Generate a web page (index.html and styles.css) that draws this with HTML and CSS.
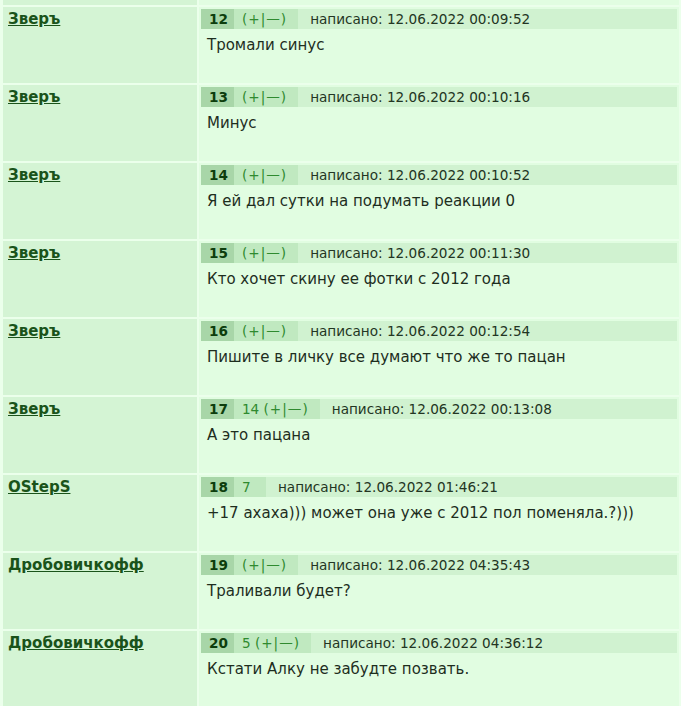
FILE: index.html
```html
<!DOCTYPE html>
<html lang="ru">
    <head>
        <meta charset="UTF-8">
        <meta name="viewport" content="width=device-width, initial-scale=1.0">
        <title>Обсуждение</title>
        <link rel="stylesheet" href="styles.css">
    </head>
    <body>
        <div class="thread">
            <!-- хвост предыдущего сообщения -->
            <div class="post post-tail">
                <div class="author"></div>
                <div class="body"></div>
            </div>

            <div class="post">
                <div class="author"><a href="#">Зверъ</a></div>
                <div class="body">
                    <div class="post-head">
                        <span class="num">12</span>
                        <span class="rate">(<a href="#">+</a>|<a href="#">&mdash;</a>)</span>
                        <span class="date">написано: 12.06.2022 00:09:52</span>
                    </div>
                    <div class="text">Тромали синус</div>
                </div>
            </div>

            <div class="post">
                <div class="author"><a href="#">Зверъ</a></div>
                <div class="body">
                    <div class="post-head">
                        <span class="num">13</span>
                        <span class="rate">(<a href="#">+</a>|<a href="#">&mdash;</a>)</span>
                        <span class="date">написано: 12.06.2022 00:10:16</span>
                    </div>
                    <div class="text">Минус</div>
                </div>
            </div>

            <div class="post">
                <div class="author"><a href="#">Зверъ</a></div>
                <div class="body">
                    <div class="post-head">
                        <span class="num">14</span>
                        <span class="rate">(<a href="#">+</a>|<a href="#">&mdash;</a>)</span>
                        <span class="date">написано: 12.06.2022 00:10:52</span>
                    </div>
                    <div class="text">Я ей дал сутки на подумать реакции 0</div>
                </div>
            </div>

            <div class="post">
                <div class="author"><a href="#">Зверъ</a></div>
                <div class="body">
                    <div class="post-head">
                        <span class="num">15</span>
                        <span class="rate">(<a href="#">+</a>|<a href="#">&mdash;</a>)</span>
                        <span class="date">написано: 12.06.2022 00:11:30</span>
                    </div>
                    <div class="text">Кто хочет скину ее фотки с 2012 года</div>
                </div>
            </div>

            <div class="post">
                <div class="author"><a href="#">Зверъ</a></div>
                <div class="body">
                    <div class="post-head">
                        <span class="num">16</span>
                        <span class="rate">(<a href="#">+</a>|<a href="#">&mdash;</a>)</span>
                        <span class="date">написано: 12.06.2022 00:12:54</span>
                    </div>
                    <div class="text">Пишите в личку все думают что же то пацан</div>
                </div>
            </div>

            <div class="post">
                <div class="author"><a href="#">Зверъ</a></div>
                <div class="body">
                    <div class="post-head">
                        <span class="num">17</span>
                        <span class="rate">14 (<a href="#">+</a>|<a href="#">&mdash;</a>)</span>
                        <span class="date">написано: 12.06.2022 00:13:08</span>
                    </div>
                    <div class="text">А это пацана</div>
                </div>
            </div>

            <div class="post">
                <div class="author"><a href="#">OStepS</a></div>
                <div class="body">
                    <div class="post-head">
                        <span class="num">18</span>
                        <span class="rate">7</span>
                        <span class="date">написано: 12.06.2022 01:46:21</span>
                    </div>
                    <div class="text">+17 ахаха))) может она уже с 2012 пол поменяла.?)))</div>
                </div>
            </div>

            <div class="post">
                <div class="author"><a href="#">Дробовичкофф</a></div>
                <div class="body">
                    <div class="post-head">
                        <span class="num">19</span>
                        <span class="rate">(<a href="#">+</a>|<a href="#">&mdash;</a>)</span>
                        <span class="date">написано: 12.06.2022 04:35:43</span>
                    </div>
                    <div class="text">Траливали будет?</div>
                </div>
            </div>

            <div class="post">
                <div class="author"><a href="#">Дробовичкофф</a></div>
                <div class="body">
                    <div class="post-head">
                        <span class="num">20</span>
                        <span class="rate">5 (<a href="#">+</a>|<a href="#">&mdash;</a>)</span>
                        <span class="date">написано: 12.06.2022 04:36:12</span>
                    </div>
                    <div class="text">Кстати Алку не забудте позвать.</div>
                </div>
            </div>
        </div>
    </body>
</html>
```

FILE: styles.css
```css
/* Общие стили */
body, html {
    margin: 0;
    padding: 0;
    background-color: #ebffeb;
    font-family: 'DejaVu Sans', Verdana, sans-serif;
    color: #1e2e1e;
    overflow: hidden;
}

/* Лента сообщений */
.thread {
    display: flex;
    flex-direction: column;
    gap: 2px;
    padding: 0 2px 0 3px;
}

.post {
    display: grid;
    grid-template-columns: 194px 1fr;
    gap: 2px;
    height: 76px;
}

.post-tail {
    height: 5px;
}

/* Колонка автора */
.author {
    background-color: #d4f4d4;
    padding: 2px 5px;
}

.author a {
    color: #1a531a;
    font-weight: bold;
    font-size: 15px;
    line-height: 16px;
}

/* Колонка текста */
.body {
    background-color: #e1fde1;
    padding: 2px;
}

.post-head {
    display: flex;
    background-color: #d0f2d0;
    height: 20px;
    line-height: 20px;
    font-size: 13.6px;
}

.num {
    background-color: #a8d6a8;
    color: #0d3d0d;
    font-weight: bold;
    padding: 0 6px 0 8px;
}

/* Оценка: плюс / минус */
.rate {
    background-color: #c0e9c0;
    color: #2f8a2f;
    padding: 0 12px 0 8px;
    min-width: 12px;
}

.rate a {
    color: #2f8a2f;
    text-decoration: none;
    padding: 0 1px;
}

.date {
    color: #233523;
    padding-left: 12px;
}

.text {
    font-size: 15px;
    line-height: 18px;
    padding: 7px 6px 0;
}
```
